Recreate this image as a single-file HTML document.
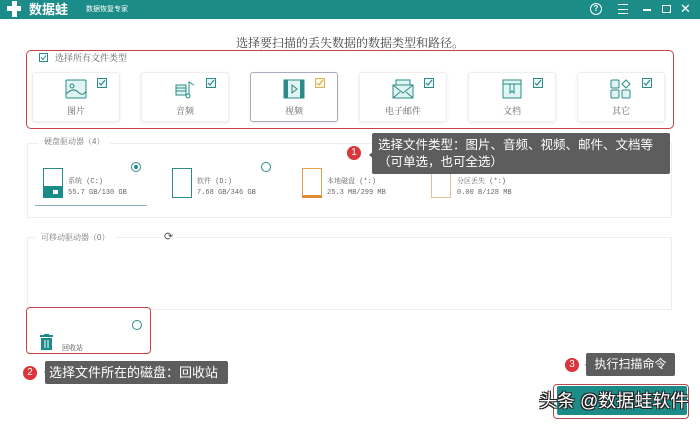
<!DOCTYPE html>
<html><head><meta charset="utf-8"><style>
*{margin:0;padding:0;box-sizing:border-box}
body{width:700px;height:426px;background:#fff;position:relative;overflow:hidden;font-family:"Liberation Sans","Noto Serif CJK SC","Noto Sans CJK SC",sans-serif;color:#555}
.a{position:absolute}
.card{position:absolute;top:72px;width:88px;height:50px;border:1px solid #eee;border-radius:3px;box-shadow:0 1px 3px rgba(0,0,0,.08);background:#fff}
.card .lb{position:absolute;top:31px;width:100%;text-align:center;font-size:9px;color:#666}
.card .cb{position:absolute;top:5px;right:12px;width:10px;height:10px;border:1px solid #2a8b88;background:#eef8f7}
.cb svg{position:absolute;left:0;top:0}
.ic{position:absolute;left:32px;top:6px;width:22px;height:20px}
.tip{position:absolute;background:#5d5d5d;color:#fff;font-family:"Liberation Sans","Noto Sans CJK SC",sans-serif;border-radius:2px}
.num{position:absolute;width:14px;height:14px;border-radius:50%;background:#d9353a;color:#fff;font-size:10px;line-height:14px;text-align:center;font-family:"Liberation Sans",sans-serif}
.dt{font-size:7px;color:#666;font-family:"Liberation Mono","Noto Serif CJK SC",monospace;position:absolute}
.radio{position:absolute;width:10px;height:10px;border:1px solid #2a8b88;border-radius:50%}
</style></head><body>
<div class="a" style="left:0;top:0;width:700px;height:19px;background:#1c8c89"></div>
<div class="a" style="left:7px;top:1px;width:14px;height:16px">
<div class="a" style="left:5px;top:0;width:5px;height:16px;background:#fff"></div><div class="a" style="left:0;top:5px;width:14px;height:5px;background:#fff"></div></div>
<div class="a" style="left:29px;top:1px;font-size:13px;font-weight:bold;color:#fff;font-family:'Noto Sans CJK SC',sans-serif;line-height:16px">数据蛙</div>
<div class="a" style="left:86px;top:4px;font-size:7px;color:#fff;font-family:'Noto Sans CJK SC',sans-serif">数据恢复专家</div>
<div class="a" style="left:590px;top:3px;width:12px;height:12px;border:1.5px solid #fff;border-radius:50%;color:#fff;font-size:8px;line-height:9px;text-align:center;font-weight:bold">?</div>
<div class="a" style="left:618px;top:4px;width:10px;height:10px;border-top:1.5px solid #fff;border-bottom:1.5px solid #fff"></div>
<div class="a" style="left:618px;top:8.5px;width:10px;height:1.5px;background:#fff"></div>
<div class="a" style="left:643px;top:9px;width:8px;height:1.5px;background:#fff"></div>
<div class="a" style="left:662px;top:5px;width:9px;height:8px;border:1.5px solid #fff"></div>
<div class="a" style="left:680px;top:1px;color:#fff;font-size:13px;line-height:16px">✕</div>

<div class="a" style="left:0;width:700px;top:34px;text-align:center;font-size:12px;color:#444">选择要扫描的丢失数据的数据类型和路径。</div>
<div class="a" style="left:26px;top:50px;width:648px;height:79px;border:1.5px solid #c9444a;border-radius:5px"></div>
<div class="a" style="left:39px;top:53px;width:9px;height:9px;border:1px solid #2a8b88"><svg class="a" style="left:0;top:0" width="7" height="7" viewBox="0 0 7 7"><path d="M1 3.5l2 2 3-4" fill="none" stroke="#2a8b88" stroke-width="1"/></svg></div>
<div class="a" style="left:55px;top:51px;font-size:9px;color:#666">选择所有文件类型</div>

<div class="card" style="left:32px"><svg class="ic" viewBox="0 0 22 20"><rect x="1" y="1" width="20" height="18" rx="1" fill="#e0f4f2" stroke="#2a8b88"/><circle cx="7" cy="7" r="2" fill="none" stroke="#2a8b88"/><path d="M1 15 Q8 8 13 13 T21 12" fill="none" stroke="#2a8b88"/></svg><div class="cb"><svg width="8" height="8" viewBox="0 0 8 8"><path d="M1 4l2 2 4-5" fill="none" stroke="#2a8b88" stroke-width="1.2"/></svg></div><div class="lb">图片</div></div>
<div class="card" style="left:141px"><svg class="ic" viewBox="0 0 22 20"><rect x="2" y="6" width="10" height="10" fill="#e0f4f2" stroke="#2a8b88"/><path d="M2 9h10M2 12h10" stroke="#2a8b88"/><path d="M15 18V3l5 3" fill="none" stroke="#2a8b88"/><circle cx="14" cy="17" r="2" fill="#e0f4f2" stroke="#2a8b88"/></svg><div class="cb"><svg width="8" height="8" viewBox="0 0 8 8"><path d="M1 4l2 2 4-5" fill="none" stroke="#2a8b88" stroke-width="1.2"/></svg></div><div class="lb">音频</div></div>
<div class="card" style="left:250px;border-color:#aab;"><svg class="ic" viewBox="0 0 22 20"><rect x="1" y="1" width="20" height="18" fill="#e0f4f2" stroke="#2a8b88"/><rect x="1" y="1" width="4" height="18" fill="#2a8b88"/><rect x="17" y="1" width="4" height="18" fill="#2a8b88"/><path d="M9 6l5 4-5 4z" fill="none" stroke="#2a8b88"/></svg><div class="cb" style="border-color:#e0b050;background:#fdf5e4"><svg width="8" height="8" viewBox="0 0 8 8"><path d="M1 4l2 2 4-5" fill="none" stroke="#e0b050" stroke-width="1.2"/></svg></div><div class="lb">视频</div></div>
<div class="card" style="left:359px"><svg class="ic" viewBox="0 0 22 20"><rect x="4" y="1" width="14" height="8" fill="#e0f4f2" stroke="#2a8b88"/><rect x="1" y="6" width="20" height="13" fill="#e0f4f2" stroke="#2a8b88"/><path d="M1 6l10 8 10-8M1 19l7-6M21 19l-7-6" fill="none" stroke="#2a8b88"/></svg><div class="cb"><svg width="8" height="8" viewBox="0 0 8 8"><path d="M1 4l2 2 4-5" fill="none" stroke="#2a8b88" stroke-width="1.2"/></svg></div><div class="lb">电子邮件</div></div>
<div class="card" style="left:468px"><svg class="ic" viewBox="0 0 22 20"><rect x="2" y="1" width="18" height="18" fill="#e0f4f2" stroke="#2a8b88"/><path d="M2 5h18M9 5v9l2-2 2 2V5" fill="none" stroke="#2a8b88"/></svg><div class="cb"><svg width="8" height="8" viewBox="0 0 8 8"><path d="M1 4l2 2 4-5" fill="none" stroke="#2a8b88" stroke-width="1.2"/></svg></div><div class="lb">文档</div></div>
<div class="card" style="left:577px"><svg class="ic" viewBox="0 0 22 20"><rect x="1" y="1" width="8" height="8" rx="1" fill="#e0f4f2" stroke="#2a8b88"/><path d="M16 1l4 4-4 4-4-4z" fill="none" stroke="#2a8b88"/><rect x="1" y="11" width="8" height="8" rx="1" fill="#e0f4f2" stroke="#2a8b88"/><rect x="12" y="11" width="8" height="8" rx="1" fill="#e0f4f2" stroke="#2a8b88"/></svg><div class="cb"><svg width="8" height="8" viewBox="0 0 8 8"><path d="M1 4l2 2 4-5" fill="none" stroke="#2a8b88" stroke-width="1.2"/></svg></div><div class="lb">其它</div></div>

<div class="a" style="left:27px;top:143px;width:645px;height:75px;border:1px solid #eee"></div>
<div class="a" style="left:38px;top:136px;padding:0 6px;background:#fff;font-size:8px;color:#777">硬盘驱动器（4）</div>
<div class="a" style="left:43px;top:168px;width:20px;height:30px;border:1px solid #2a8b88"></div>
<div class="a" style="left:43px;top:186px;width:20px;height:12px;background:#1c8c89"></div>
<div class="a" style="left:53px;top:190px;width:5px;height:4px;background:#fff"></div>
<div class="dt" style="left:68px;top:176px">系统 (C:)</div><div class="dt" style="left:68px;top:189px">55.7 GB/130 GB</div>
<div class="a" style="left:35px;top:205px;width:112px;height:1px;background:#8ab"></div>
<div class="radio" style="left:131px;top:162px"><div class="a" style="left:2px;top:2px;width:4px;height:4px;border-radius:50%;background:#1c8c89"></div></div>
<div class="a" style="left:172px;top:168px;width:20px;height:30px;border:1px solid #2a8b88"></div>
<div class="dt" style="left:197px;top:176px">软件 (D:)</div><div class="dt" style="left:197px;top:189px">7.68 GB/346 GB</div>
<div class="radio" style="left:261px;top:162px"></div>
<div class="a" style="left:302px;top:168px;width:20px;height:30px;border:1px solid #e0a050;border-bottom:3px solid #e08a30"></div>
<div class="dt" style="left:327px;top:176px">本地磁盘 (*:)</div><div class="dt" style="left:327px;top:189px">25.3 MB/299 MB</div>
<div class="a" style="left:431px;top:168px;width:20px;height:30px;border:1px solid #e0c090"></div>
<div class="dt" style="left:457px;top:176px">分区丢失 (*:)</div><div class="dt" style="left:457px;top:189px">0.00  B/128 MB</div>

<div class="num" style="left:347px;top:146px">1</div>
<div class="a" style="left:364px;top:150px;border:5px solid transparent;border-right:6px solid #5d5d5d;width:0;height:0"></div>
<div class="tip" style="left:372px;top:133px;width:298px;height:41px;font-size:12.5px;line-height:17px;padding:4px 6px">选择文件类型：图片、音频、视频、邮件、文档等<br>（可单选，也可全选）</div>

<div class="a" style="left:27px;top:237px;width:645px;height:73px;border:1px solid #eee"></div>
<div class="a" style="left:35px;top:232px;padding:0 6px;background:#fff;font-size:8px;color:#777">可移动驱动器（0）</div>
<div class="a" style="left:160px;top:230px;padding:0 4px;background:#fff;font-size:11px;color:#555">⟳</div>

<div class="a" style="left:26px;top:307px;width:125px;height:47px;border:1.5px solid #c9444a;border-radius:4px;background:#fff"></div>
<div class="radio" style="left:132px;top:320px"></div>
<svg class="a" style="left:40px;top:334px" width="13" height="16" viewBox="0 0 13 16"><rect x="0" y="1" width="13" height="2" fill="#1c8c89"/><rect x="4" y="0" width="5" height="2" fill="#1c8c89"/><rect x="1" y="4" width="11" height="12" fill="#1c8c89"/><path d="M5 6v8M8 6v8" stroke="#fff"/></svg>
<div class="a" style="left:62px;top:343px;font-size:7px;color:#444">回收站</div>

<div class="num" style="left:23px;top:366px">2</div>
<div class="a" style="left:39px;top:367px;border:5px solid transparent;border-right:6px solid #5d5d5d;width:0;height:0"></div>
<div class="tip" style="left:45px;top:361px;width:183px;height:23px;font-size:13px;line-height:23px;padding-left:4px">选择文件所在的磁盘：回收站</div>

<div class="num" style="left:565px;top:358px">3</div>
<div class="a" style="left:580px;top:360px;border:5px solid transparent;border-right:6px solid #5d5d5d;width:0;height:0"></div>
<div class="tip" style="left:586px;top:353px;width:89px;height:23px;font-size:12px;line-height:23px;text-align:center">执行扫描命令</div>

<div class="a" style="left:553px;top:384px;width:136px;height:35px;border:1.5px solid #b04a50;border-radius:4px"></div>
<div class="a" style="left:557px;top:386px;width:130px;height:29px;background:#1c8c89;border-radius:2px"></div>
<div class="a" style="left:539px;top:389px;font-size:18px;line-height:24px;color:#fff;font-family:'Liberation Sans','Noto Sans CJK SC',sans-serif;text-shadow:-1px -1px 0 #222,1px -1px 0 #222,-1px 1px 0 #222,1px 1px 0 #222">头条 @数据蛙软件</div>
</body></html>
